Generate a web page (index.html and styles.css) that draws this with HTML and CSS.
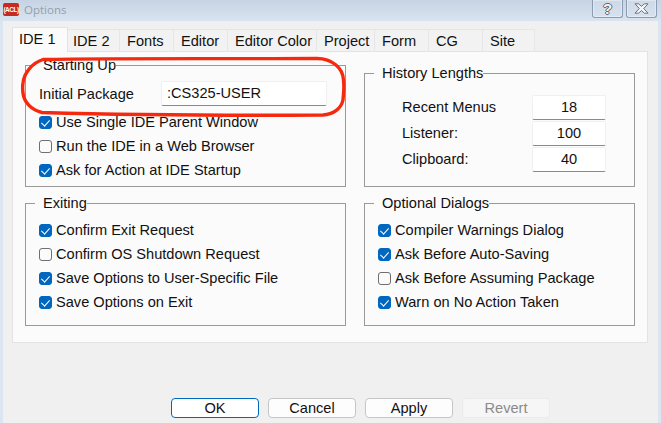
FILE: index.html
```html
<!DOCTYPE html>
<html lang="en">
<head>
<meta charset="utf-8">
<title>Options</title>
<link rel="stylesheet" href="styles.css">
</head>
<body>
<div class="window">
  <header class="titlebar">
    <span class="logo">(ACL)</span>
    <span class="title">Options</span>
    <div class="controls">
      <span class="ctl ctl-help">?</span>
      <span class="ctl ctl-close">
        <svg width="17" height="11" viewBox="0 0 17 11"><path d="M2 .8h3.600L8.500 3.400 11.400.8H15L10.700 5.500 15 10.200h-3.600L8.500 7.600 5.600 10.200H2L6.300 5.500Z" fill="#f4f6f8" stroke="#5d6673" stroke-width=".9"/></svg>
      </span>
    </div>
  </header>
  <main class="client">
    <nav class="tabs">
      <span class="tab tab-active w56">IDE 1</span>
      <span class="tab tab-next w52">IDE 2</span>
      <span class="tab w54">Fonts</span>
      <span class="tab w54">Editor</span>
      <span class="tab w89">Editor Color</span>
      <span class="tab w58">Project</span>
      <span class="tab w54">Form</span>
      <span class="tab w54">CG</span>
      <span class="tab w52">Site</span>
    </nav>
    <section class="panel">
      <div class="col col-left">
        <fieldset class="group group-startup">
          <legend>Starting Up</legend>
          <div class="package-row">
            <label class="field-label">Initial Package</label>
            <div class="input input-package">:CS325-USER</div>
          </div>
          <div class="check-row"><span class="box on"></span>Use Single IDE Parent Window</div>
          <div class="check-row"><span class="box"></span>Run the IDE in a Web Browser</div>
          <div class="check-row"><span class="box on"></span>Ask for Action at IDE Startup</div>
        </fieldset>
        <fieldset class="group group-lower">
          <legend>Exiting</legend>
          <div class="check-row"><span class="box on"></span>Confirm Exit Request</div>
          <div class="check-row"><span class="box"></span>Confirm OS Shutdown Request</div>
          <div class="check-row"><span class="box on"></span>Save Options to User-Specific File</div>
          <div class="check-row"><span class="box on"></span>Save Options on Exit</div>
        </fieldset>
      </div>
      <div class="col col-right">
        <fieldset class="group group-history">
          <legend>History Lengths</legend>
          <div class="hist-row"><span>Recent Menus</span><div class="input input-num">18</div></div>
          <div class="hist-row"><span>Listener:</span><div class="input input-num">100</div></div>
          <div class="hist-row"><span>Clipboard:</span><div class="input input-num">40</div></div>
        </fieldset>
        <fieldset class="group group-lower">
          <legend>Optional Dialogs</legend>
          <div class="check-row"><span class="box on"></span>Compiler Warnings Dialog</div>
          <div class="check-row"><span class="box on"></span>Ask Before Auto-Saving</div>
          <div class="check-row"><span class="box"></span>Ask Before Assuming Package</div>
          <div class="check-row"><span class="box on"></span>Warn on No Action Taken</div>
        </fieldset>
      </div>
    </section>
    <footer class="buttons">
      <span class="btn btn-default">OK</span>
      <span class="btn">Cancel</span>
      <span class="btn">Apply</span>
      <span class="btn btn-disabled">Revert</span>
    </footer>
  </main>
  <svg class="scribble" width="340" height="70" viewBox="0 0 340 70">
    <path d="M23 4.500C110 3 220 4 297 3.500C312 3.500 323 13 323.500 25C324.500 33 323.500 38 323 45C321 54 313 59.500 303 60C220 60.500 110 60 22 57.500C11 55 4 47 3 38C2.500 34 2.500 31 3 28C4 18 12 8 23 4.500Z" fill="none" stroke="#f5290f" stroke-width="3.400" stroke-linejoin="round"/>
  </svg>
</div>
</body>
</html>
```
FILE: styles.css
```css
* { box-sizing: border-box; }
html, body { margin: 0; padding: 0; }
body {
  width: 661px;
  height: 423px;
  overflow: hidden;
  font-family: "Liberation Sans", Arial, sans-serif;
  font-size: 14.600px;
  color: #111;
}
.window {
  position: relative;
  width: 661px;
  height: 423px;
  padding: 0 3px;
  display: flex;
  flex-direction: column;
  background: #dbe6f2;
}
.titlebar {
  height: 21px;
  margin: 0 -3px;
  padding-left: 3px;
  display: flex;
  align-items: center;
  flex: none;
  background: linear-gradient(#c6d3e3, #d9e4f0);
}
.logo {
  width: 16px;
  height: 13px;
  margin-top: -3px;
  background: #c62a20;
  border-radius: 2px;
  color: #fff;
  font: bold 6.500px/13px "Liberation Sans", sans-serif;
  letter-spacing: -.5px;
  text-align: center;
  white-space: nowrap;
}
.title {
  margin-left: 5px;
  margin-top: -2px;
  font: 11.500px "Open Sans", sans-serif;
  color: #94a0ac;
}
.controls {
  margin-left: auto;
  margin-right: 4px;
  align-self: flex-start;
  display: flex;
  gap: 3px;
}
.ctl {
  width: 31px;
  height: 18px;
  display: flex;
  align-items: center;
  justify-content: center;
  border: 1px solid #8b9bb2;
  border-top: 0;
  border-radius: 0 0 3px 3px;
  background: linear-gradient(#cdd9e8, #d8e2ee);
  box-shadow: inset 0 0 0 1px rgba(255,255,255,.35);
}
.ctl-help {
  font: bold 15px "Liberation Sans", sans-serif;
  color: #f4f6f8;
  text-shadow: -1px 0 #5d6673, 1px 0 #5d6673, 0 -1px #5d6673, 0 1px #5d6673;
}
.client {
  flex: 1;
  background: #f0f0f0;
  padding: 6px 0 0 9px;
  display: flex;
  flex-direction: column;
}
.tabs {
  display: flex;
  height: 24px;
  align-items: flex-end;
  position: relative;
  z-index: 1;
}
.tab {
  height: 22px;
  display: flex;
  align-items: center;
  padding-left: 7px;
  background: #f2f2f2;
  border: 1px solid #e6e6e6;
  border-left: 0;
  border-bottom: 0;
}
.tab-active {
  height: 25px;
  margin-bottom: -1px;
  background: #fbfbfb;
  border-left: 1px solid #e3e3e3;
  border-color: #e3e3e3;
  padding-left: 6px;
  padding-bottom: 3px;
}
.tab-next { padding-left: 5px; }
.w52 { width: 52px; }
.w54 { width: 54px; }
.w56 { width: 56px; }
.w58 { width: 58px; }
.w89 { width: 89px; }
.panel {
  width: 636px;
  height: 292px;
  flex: none;
  display: flex;
  gap: 18px;
  padding: 0 12px;
  background: #fbfbfb;
  border: 1px solid #e3e3e3;
}
.col {
  display: flex;
  flex-direction: column;
  gap: 8px;
}
.col-left { width: 321px; padding-top: 5px; }
.col-right { width: 271px; padding-top: 13px; }
.group {
  flex: none;
  margin: 0;
  min-width: 0;
  padding: 0 0 0 13px;
  border: 1px solid #999;
}
.group legend {
  margin-left: -4px;
  padding: 0 0 0 8px;
  line-height: 16px;
}
.group-startup { height: 130px; }
.group-history { height: 122px; padding-top: 13px; }
.group-lower { height: 131px; padding-top: 7px; }
.package-row {
  display: flex;
  align-items: center;
  height: 25px;
  margin-top: 8px;
  margin-bottom: 4px;
}
.field-label { width: 122px; }
.input {
  background: #fff;
  border: 1px solid #f0f0f0;
  border-bottom: 1px solid #8a8a8a;
  border-radius: 2px;
}
.input-package {
  width: 166px;
  height: 25px;
  padding: 0 5px;
  line-height: 22px;
}
.check-row {
  height: 24px;
  display: flex;
  align-items: center;
  white-space: nowrap;
}
.box {
  flex: none;
  position: relative;
  width: 13px;
  height: 13px;
  margin-right: 4px;
  background: #fbfbfb;
  border: 1px solid #6f6f6f;
  border-radius: 3px;
}
.box.on {
  background: #0067c0;
  border-color: #0067c0;
}
.box.on::after {
  content: "";
  position: absolute;
  left: 3px;
  top: 1.500px;
  width: 4px;
  height: 7px;
  border-right: 1px solid #fff;
  border-bottom: 1px solid #fff;
  transform: rotate(42deg);
}
.hist-row {
  display: flex;
  align-items: center;
  height: 26px;
  margin-left: 24px;
}
.hist-row span { width: 130px; }
.input-num {
  width: 74px;
  height: 25px;
  text-align: center;
  line-height: 22px;
}
.buttons {
  display: flex;
  gap: 9px;
  margin-top: 55px;
  padding-left: 159px;
}
.btn {
  width: 88px;
  height: 20px;
  display: flex;
  align-items: center;
  justify-content: center;
  background: #fdfdfd;
  border: 1px solid #c6c6c6;
  border-radius: 4px;
}
.btn-default {
  background: #fff;
  border-color: #0067c0;
}
.btn-disabled {
  background: #f6f6f6;
  border-color: #ebebeb;
  color: #8a8a8a;
}
.scribble {
  position: absolute;
  left: 20px;
  top: 55px;
  pointer-events: none;
  filter: blur(.3px);
}
```
